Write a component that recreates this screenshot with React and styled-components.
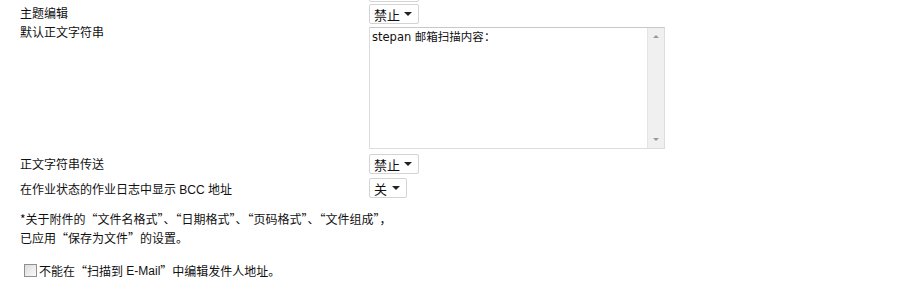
import React from 'react'
import styled, { createGlobalStyle } from 'styled-components'

const Global = createGlobalStyle`
body{
  margin:0;
  background:#fff;
  font-family:"Liberation Sans","Noto Sans CJK SC",sans-serif;
  font-size:12px;
  color:#111;
}
`

const Page = styled.div`
padding-left:20px;
margin-top:-20px;
`

const Row = styled.div`
display:grid;
grid-template-columns:349px 1fr;
align-items:start;
min-height:${p => p.h || 22}px;
`

const Label = styled.div`
line-height:${p => p.lh || 22}px;
`

const SelectBox = styled.div`
display:inline-flex;
align-items:center;
justify-content:space-between;
box-sizing:border-box;
width:${p => p.w}px;
height:20px;
margin-top:${p => p.mt || 1}px;
padding:0 6px 0 4px;
border:1px solid #d4d4d4;
border-radius:2px;
background:#fff;
font-size:13px;
color:#111;
`

const Caret = styled.span`
width:0;
height:0;
border-left:4px solid transparent;
border-right:4px solid transparent;
border-top:4px solid #222;
`

const TextBox = styled.div`
display:flex;
align-items:stretch;
box-sizing:border-box;
width:296px;
height:122px;
margin-top:1px;
border:1px solid #dcdcdc;
border-top-color:#c8c8c8;
`

const TextBody = styled.div`
flex:1;
padding:1px 2px 0;
font-family:"DejaVu Sans","Noto Sans CJK SC",sans-serif;
font-size:11.5px;
line-height:14px;
color:#111;
`

const Scroll = styled.div`
width:16px;
display:flex;
flex-direction:column;
justify-content:space-between;
align-items:center;
background:#f0f0f0;
border-left:1px solid #e4e4e4;
padding:7px 0;
`

const Arrow = styled.span`
width:0;
height:0;
border-left:3px solid transparent;
border-right:3px solid transparent;
${p => p.up ? 'border-bottom:3px solid #999;' : 'border-top:3px solid #999;'}
`

const Cjk = styled.span`
font-family:"Noto Sans CJK SC",sans-serif;
`

const Note = styled.p`
margin:7px 0 0;
line-height:17px;
`

const CheckLine = styled.label`
display:flex;
align-items:center;
margin-top:14px;
padding-left:4px;
`

const Check = styled.span`
box-sizing:border-box;
width:13px;
height:13px;
margin-right:2px;
border:1px solid #8f8f8f;
background:linear-gradient(135deg,#dcdcdc,#fafafa);
`

function Select({ text, w, mt }) {
  return (
    <SelectBox w={w} mt={mt}>
      <span>{text}</span>
      <Caret />
    </SelectBox>
  )
}

export default function App() {
  return (
    <>
      <Global />
      <Page>
        <Row>
          <Label></Label>
          <Select text="" w={50} mt={2} />
        </Row>
        <Row>
          <Label lh={24}>主题编辑</Label>
          <Select text="禁止" w={50} mt={2} />
        </Row>
        <Row h={127}>
          <Label lh={14}>默认正文字符串</Label>
          <TextBox>
            <TextBody>stepan 邮箱扫描内容<Cjk>：</Cjk></TextBody>
            <Scroll>
              <Arrow up />
              <Arrow />
            </Scroll>
          </TextBox>
        </Row>
        <Row>
          <Label lh={24}>正文字符串传送</Label>
          <Select text="禁止" w={50} mt={1} />
        </Row>
        <Row>
          <Label lh={26}>在作业状态的作业日志中显示 BCC 地址</Label>
          <Select text="关" w={38} mt={1} />
        </Row>
        <Note>
          <Cjk>*关于附件的“文件名格式”、“日期格式”、“页码格式”、“文件组成”，</Cjk><br />
          <Cjk>已应用“保存为文件”的设置。</Cjk>
        </Note>
        <CheckLine>
          <Check />
          <Cjk>不能在“扫描到</Cjk>&nbsp;E-Mail<Cjk>”中编辑发件人地址。</Cjk>
        </CheckLine>
      </Page>
    </>
  )
}
